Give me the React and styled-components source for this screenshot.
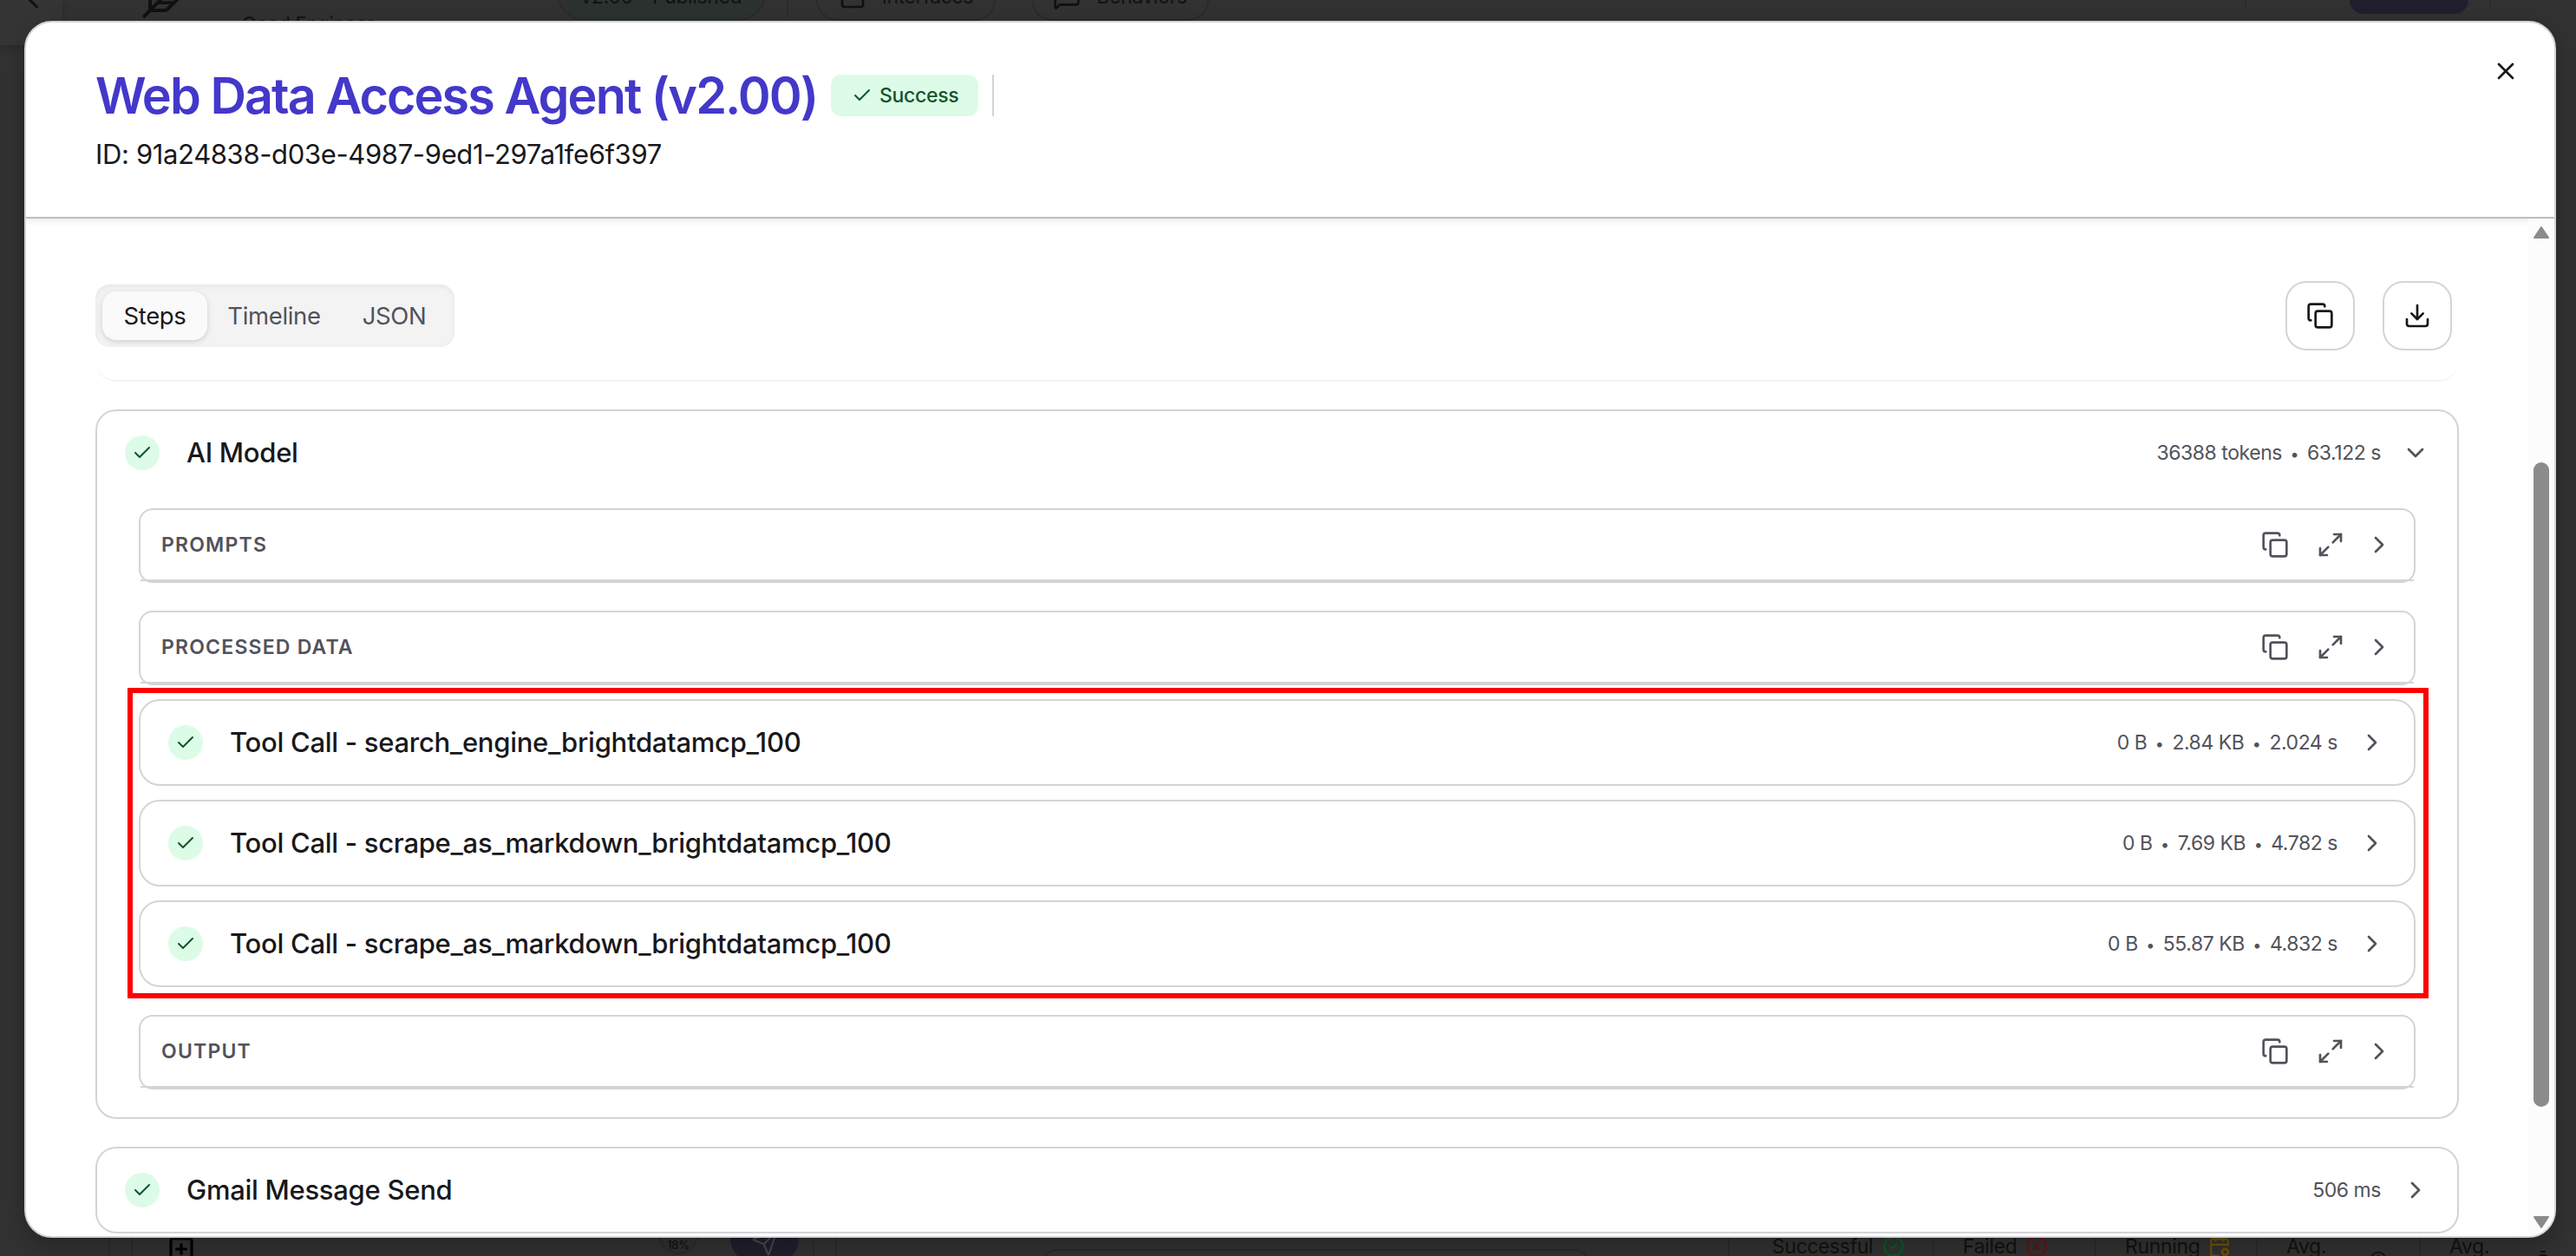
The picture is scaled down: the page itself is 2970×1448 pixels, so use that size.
import React, { useState } from "react";
import styled, { createGlobalStyle } from "styled-components";
import {
  Check,
  ChevronDown,
  ChevronLeft,
  ChevronRight,
  CircleCheck,
  CircleX,
  Clock,
  Copy,
  Download,
  Feather,
  CalendarCog,
  Maximize2,
  MessageSquare,
  Send,
  Square,
  SquarePlus,
  Timer,
  X,
} from "lucide-react";

const GlobalStyle = createGlobalStyle`
  * {
    box-sizing: border-box;
  }

  body {
    margin: 0;
    overflow: hidden;
    background: #323232;
    font-family: Inter, "Liberation Sans", sans-serif;
  }

  button {
    padding: 0;
    border: none;
    background: none;
    font-family: inherit;
    color: inherit;
  }
`;

const Screen = styled.div`
  position: relative;
  width: 2970px;
  height: 1448px;
  overflow: hidden;
`;

/* Dimmed page behind the dialog */

const Page = styled.div`
  display: flex;
  flex-direction: column;
  justify-content: space-between;
  height: 100%;
  background: #323232;
  color: #111111;
`;

const TopBar = styled.div`
  display: flex;
  align-items: flex-end;
  height: 24px;

  svg {
    flex: none;
  }
`;

const BackButton = styled.div`
  width: 72px;
  height: 52px;
  margin-bottom: -28px;
  padding: 0 0 0 20px;
  border-bottom-right-radius: 24px;
  background: #353535;
  box-shadow: 0 4px 8px rgba(0, 0, 0, 0.15);

  svg {
    margin-top: -19px;
  }
`;

const Logo = styled.div`
  height: 24px;
  margin-left: 90px;

  svg {
    margin-top: -30px;
  }
`;

const Project = styled.span`
  height: 6px;
  margin-left: 64px;
  font-size: 22px;
  line-height: 18px;
  letter-spacing: -0.2px;
  white-space: nowrap;
`;

const Chip = styled.div`
  display: flex;
  justify-content: center;
  flex: none;
  gap: 18px;
  width: ${(p) => p.$width}px;
  height: 64px;
  margin-left: ${(p) => p.$left}px;
  padding-top: 22px;
  border: 2px solid #2b2b2b;
  border-radius: ${(p) => (p.$green ? 32 : 24)}px;
  background: ${(p) => (p.$green ? "#2c3230" : "none")};
  font-size: 23px;
  line-height: 24px;
  letter-spacing: -0.4px;
  white-space: nowrap;

  svg {
    margin-top: -4px;
  }
`;

const Rule = styled.span`
  width: 2px;
  height: ${(p) => p.$height}px;
  margin-left: ${(p) => p.$left}px;
  margin-bottom: ${(p) => p.$bottom}px;
  background: #2b2b2b;
`;

const Primary = styled.span`
  width: 137px;
  height: 40px;
  margin-left: 119px;
  margin-bottom: 8px;
  border-radius: 16px;
  background: #211f2e;
`;

const StatusBar = styled.div`
  display: flex;
  height: 48px;
  margin-bottom: -20px;
  padding-left: 125px;
`;

const Cell = styled.div`
  display: flex;
  flex: none;
  gap: ${(p) => p.$gap || 10}px;
  width: ${(p) => p.$width}px;
  padding-left: ${(p) => p.$pad || 0}px;
  border-left: 2px solid #2b2b2b;
  font-size: 23px;
  line-height: 34px;
  letter-spacing: -0.35px;

  svg {
    flex: none;
    margin-top: ${(p) => p.$drop || 4}px;
  }
`;

const Percent = styled.span`
  display: flex;
  justify-content: center;
  flex: none;
  width: 46px;
  height: 46px;
  margin: -20px 27px 0 524px;
  padding-top: 25px;
  border: 3px solid #2c2c2c;
  border-radius: 50%;
  font-size: 13px;
  font-weight: 500;
  line-height: 14px;
`;

const SendButton = styled.span`
  display: flex;
  justify-content: center;
  flex: none;
  width: 79px;
  height: 80px;
  margin-top: -44px;
  padding-top: 37px;
  border-radius: 28px;
  background: #211f2e;
  color: #4a4a50;
`;

const Input = styled.span`
  width: 630px;
  height: 40px;
  margin-top: 20px;
  border: 2px solid #2a2a2a;
  border-radius: 16px;
`;

/* Dialog */

const Dialog = styled.section`
  position: absolute;
  top: 24px;
  left: 28px;
  display: flex;
  flex-direction: column;
  width: 2919px;
  height: 1403px;
  border: 2px solid #d4d4d8;
  border-radius: 32px;
  background: #ffffff;
  box-shadow: 0 10px 30px rgba(0, 0, 0, 0.25);
  overflow: hidden;
`;

const Header = styled.header`
  display: flex;
  justify-content: space-between;
  flex: none;
  height: 226px;
  padding: 50px 40px 0 80px;
  border-bottom: 2px solid #bdbdbd;
  box-shadow: 0 2px 8px rgba(0, 0, 0, 0.1);
`;

const TitleRow = styled.div`
  display: flex;
  align-items: center;
  height: 68px;
`;

const Title = styled.h1`
  width: 848px;
  margin: 0;
  color: #4338ca;
  font-size: 57.5px;
  font-weight: 600;
  line-height: 68px;
  letter-spacing: -1.93px;
  white-space: nowrap;
`;

const Badge = styled.span`
  display: flex;
  align-items: center;
  gap: 8px;
  width: 170px;
  height: 48px;
  padding-left: 24px;
  border-radius: 12px;
  background: #dcfce7;
  color: #14532d;
  font-size: 23px;
  font-weight: 500;
  letter-spacing: -0.3px;
`;

const Divider = styled.span`
  width: 2px;
  height: 48px;
  margin-left: 16px;
  background: #d4d4d8;
`;

const RunId = styled.p`
  margin: 14px 0 0;
  color: #18181b;
  font-size: 31px;
  line-height: 40px;
  letter-spacing: -0.36px;
`;

const CloseButton = styled.button`
  width: 32px;
  height: 32px;
  margin-top: -10px;
  color: #18181b;
`;

const Body = styled.div`
  display: flex;
  flex: 1;
  min-height: 0;
`;

const Content = styled.main`
  flex: 1;
  padding: 72px 80px 0;
`;

const Toolbar = styled.div`
  display: flex;
  align-items: center;
  justify-content: space-between;
  height: 116px;
  padding: 0 8px 34px 0;
  border-bottom: 2px solid #f4f4f5;
  border-radius: 0 0 24px 24px;
`;

const Tabs = styled.div`
  display: flex;
  height: 72px;
  padding: 8px;
  border-radius: 16px;
  background: #f3f3f3;
  box-shadow: inset 0 2px 6px rgba(0, 0, 0, 0.06);
`;

const Tab = styled.button`
  width: ${(p) => p.$width}px;
  border-radius: 16px;
  background: ${(p) => (p.$active ? "#fafafa" : "none")};
  box-shadow: ${(p) => (p.$active ? "0 2px 6px rgba(0, 0, 0, 0.15)" : "none")};
  color: ${(p) => (p.$active ? "#18181b" : "#52525b")};
  font-size: 27.5px;
  line-height: 56px;
  letter-spacing: -0.35px;
`;

const Actions = styled.div`
  display: flex;
  gap: 32px;
`;

const IconButton = styled.button`
  display: flex;
  align-items: center;
  justify-content: center;
  width: 80px;
  height: 80px;
  border: 2px solid #d4d4d8;
  border-radius: 24px;
  color: #18181b;
`;

const StepCard = styled.article`
  margin-top: 32px;
  border: 2px solid #d4d4d8;
  border-radius: 24px;
`;

const ToolCard = styled(StepCard)`
  margin: 0;
`;

const ToolList = styled.div`
  display: flex;
  flex-direction: column;
  gap: 16px;
  margin-bottom: 32px;
`;

const StepHeader = styled.div`
  display: flex;
  align-items: center;
  height: 96px;
  padding: 0 32px;
  color: #52525b;
`;

const StatusDot = styled.span`
  display: flex;
  align-items: center;
  justify-content: center;
  width: 40px;
  height: 40px;
  margin-right: 31px;
  border-radius: 50%;
  background: #dcfce7;
  color: #14532d;
`;

const StepName = styled.h2`
  flex: 1;
  margin: 0;
  padding-bottom: 2px;
  color: #18181b;
  font-size: 31px;
  font-weight: 500;
  letter-spacing: -0.28px;
`;

const Meta = styled.span`
  margin-right: 24px;
  padding-bottom: 1px;
  font-size: 23px;
  letter-spacing: -0.45px;
`;

const Dot = styled.span`
  display: inline-block;
  width: 29px;
  font-size: 18px;
  letter-spacing: 0;
  text-align: center;
`;

const StepBody = styled.div`
  padding: 16px 48px 32px;
`;

const Panel = styled.div`
  margin-bottom: ${(p) => p.$gap}px;
  border: 2px solid #d4d4d8;
  border-radius: 16px;
`;

const PanelHeader = styled.div`
  display: flex;
  align-items: center;
  height: 82px;
  padding: 0 24px;
  border-bottom: 2px solid #d4d4d8;
  color: #52525b;
`;

const PanelTitle = styled.h3`
  flex: 1;
  margin: 0;
  font-size: 23px;
  font-weight: 600;
  letter-spacing: 1.2px;
`;

const PanelIcons = styled.div`
  display: flex;
  gap: 32px;
  margin-right: 24px;
`;

const Highlight = styled.div`
  position: absolute;
  top: 767px;
  left: 117px;
  width: 2653px;
  height: 358px;
  border: 6px solid #ff0000;
`;

const Scrollbar = styled.div`
  display: flex;
  flex-direction: column;
  align-items: center;
  justify-content: space-between;
  width: 30px;
  padding: 8px 0;
  background: #fcfcfc;
`;

const Thumb = styled.div`
  width: 18px;
  height: 743px;
  margin-top: 131px;
  border-radius: 9px;
  background: #8b8b8b;
`;

const Arrow = ({ down }) => (
  <svg width="20" height="16" viewBox="0 0 20 16">
    <path
      d={down ? "M2 2h16l-8 12z" : "M2 14h16L10 2z"}
      fill="#8b8b8b"
      stroke="#8b8b8b"
      strokeWidth="2"
      strokeLinejoin="round"
    />
  </svg>
);

const toolCalls = [
  {
    name: "search_engine_brightdatamcp_100",
    meta: ["0 B", "2.84 KB", "2.024 s"],
  },
  {
    name: "scrape_as_markdown_brightdatamcp_100",
    meta: ["0 B", "7.69 KB", "4.782 s"],
  },
  {
    name: "scrape_as_markdown_brightdatamcp_100",
    meta: ["0 B", "55.87 KB", "4.832 s"],
  },
];

const tabs = [
  { name: "Steps", width: 121 },
  { name: "Timeline", width: 154 },
  { name: "JSON", width: 123 },
];

const Step = ({ name, meta, open }) => (
  <StepHeader>
    <StatusDot>
      <Check size={24} strokeWidth={2} />
    </StatusDot>
    <StepName>{name}</StepName>
    <Meta>
      {meta.map((item, index) => (
        <React.Fragment key={index}>
          {index > 0 && <Dot>•</Dot>}
          {item}
        </React.Fragment>
      ))}
    </Meta>
    {open ? <ChevronDown size={32} /> : <ChevronRight size={32} />}
  </StepHeader>
);

const DataPanel = ({ title, gap }) => (
  <Panel $gap={gap}>
    <PanelHeader>
      <PanelTitle>{title}</PanelTitle>
      <PanelIcons>
        <Copy size={32} />
        <Maximize2 size={32} />
      </PanelIcons>
      <ChevronRight size={32} />
    </PanelHeader>
  </Panel>
);

const Background = () => (
  <Page>
    <TopBar>
      <BackButton>
        <ChevronLeft size={36} />
      </BackButton>
      <Logo>
        <Feather size={53} strokeWidth={1.8} />
      </Logo>
      <Project>Good Engineer</Project>
      <Chip $width={241} $left={211} $green>
        v2.00 - Published
      </Chip>
      <Rule $height={20} $left={24} $bottom={4} />
      <Chip $width={207} $left={32}>
        <Square size={32} />
        Interfaces
      </Chip>
      <Chip $width={205} $left={41}>
        <MessageSquare size={32} />
        Behaviors
      </Chip>
      <Rule $height={12} $left={1194} $bottom={12} />
      <Primary />
      <Rule $height={12} $left={24} $bottom={12} />
    </TopBar>
    <StatusBar>
      <Cell $width={26} />
      <Cell $width={786} $pad={40}>
        <SquarePlus size={32} strokeWidth={2.4} color="#000000" />
        <Percent>18%</Percent>
        <SendButton>
          <Send size={32} strokeWidth={1.5} />
        </SendButton>
      </Cell>
      <Cell $width={26} />
      <Cell $width={1029} $pad={237}>
        <Input />
      </Cell>
      <Cell $width={236} $pad={49}>
        Successful
        <CircleCheck size={26} color="#085c26" />
      </Cell>
      <Cell $width={187} $pad={33}>
        Failed
        <CircleX size={26} color="#6b1212" />
      </Cell>
      <Cell $width={186} $pad={33}>
        Running
        <CalendarCog size={26} color="#6e5200" />
      </Cell>
      <Cell $width={188} $pad={33} $gap={50} $drop={22}>
        Avg.
        <Clock size={20} />
      </Cell>
      <Cell $width={180} $pad={33} $gap={50} $drop={21}>
        Avg.
        <Timer size={24} />
      </Cell>
    </StatusBar>
  </Page>
);

const App = () => {
  const [activeTab, setActiveTab] = useState("Steps");

  return (
    <Screen>
      <GlobalStyle />
      <Background />
      <Dialog>
        <Header>
          <div>
            <TitleRow>
              <Title>Web Data Access Agent (v2.00)</Title>
              <Badge>
                <Check size={24} />
                Success
              </Badge>
              <Divider />
            </TitleRow>
            <RunId>ID: 91a24838-d03e-4987-9ed1-297a1fe6f397</RunId>
          </div>
          <CloseButton>
            <X size={32} />
          </CloseButton>
        </Header>
        <Body>
          <Content>
            <Toolbar>
              <Tabs>
                {tabs.map((tab) => (
                  <Tab
                    key={tab.name}
                    $width={tab.width}
                    $active={tab.name === activeTab}
                    onClick={() => setActiveTab(tab.name)}
                  >
                    {tab.name}
                  </Tab>
                ))}
              </Tabs>
              <Actions>
                <IconButton>
                  <Copy size={32} />
                </IconButton>
                <IconButton>
                  <Download size={32} />
                </IconButton>
              </Actions>
            </Toolbar>
            <StepCard>
              <Step name="AI Model" meta={["36388 tokens", "63.122 s"]} open />
              <StepBody>
                <DataPanel title="PROMPTS" gap={32} />
                <DataPanel title="PROCESSED DATA" gap={16} />
                <ToolList>
                  {toolCalls.map((call, index) => (
                    <ToolCard key={index}>
                      <Step
                        name={`Tool Call - ${call.name}`}
                        meta={call.meta}
                      />
                    </ToolCard>
                  ))}
                </ToolList>
                <DataPanel title="OUTPUT" gap={0} />
              </StepBody>
            </StepCard>
            <StepCard>
              <Step name="Gmail Message Send" meta={["506 ms"]} />
            </StepCard>
          </Content>
          <Scrollbar>
            <Arrow />
            <Thumb />
            <Arrow down />
          </Scrollbar>
        </Body>
        <Highlight />
      </Dialog>
    </Screen>
  );
};

export default App;
